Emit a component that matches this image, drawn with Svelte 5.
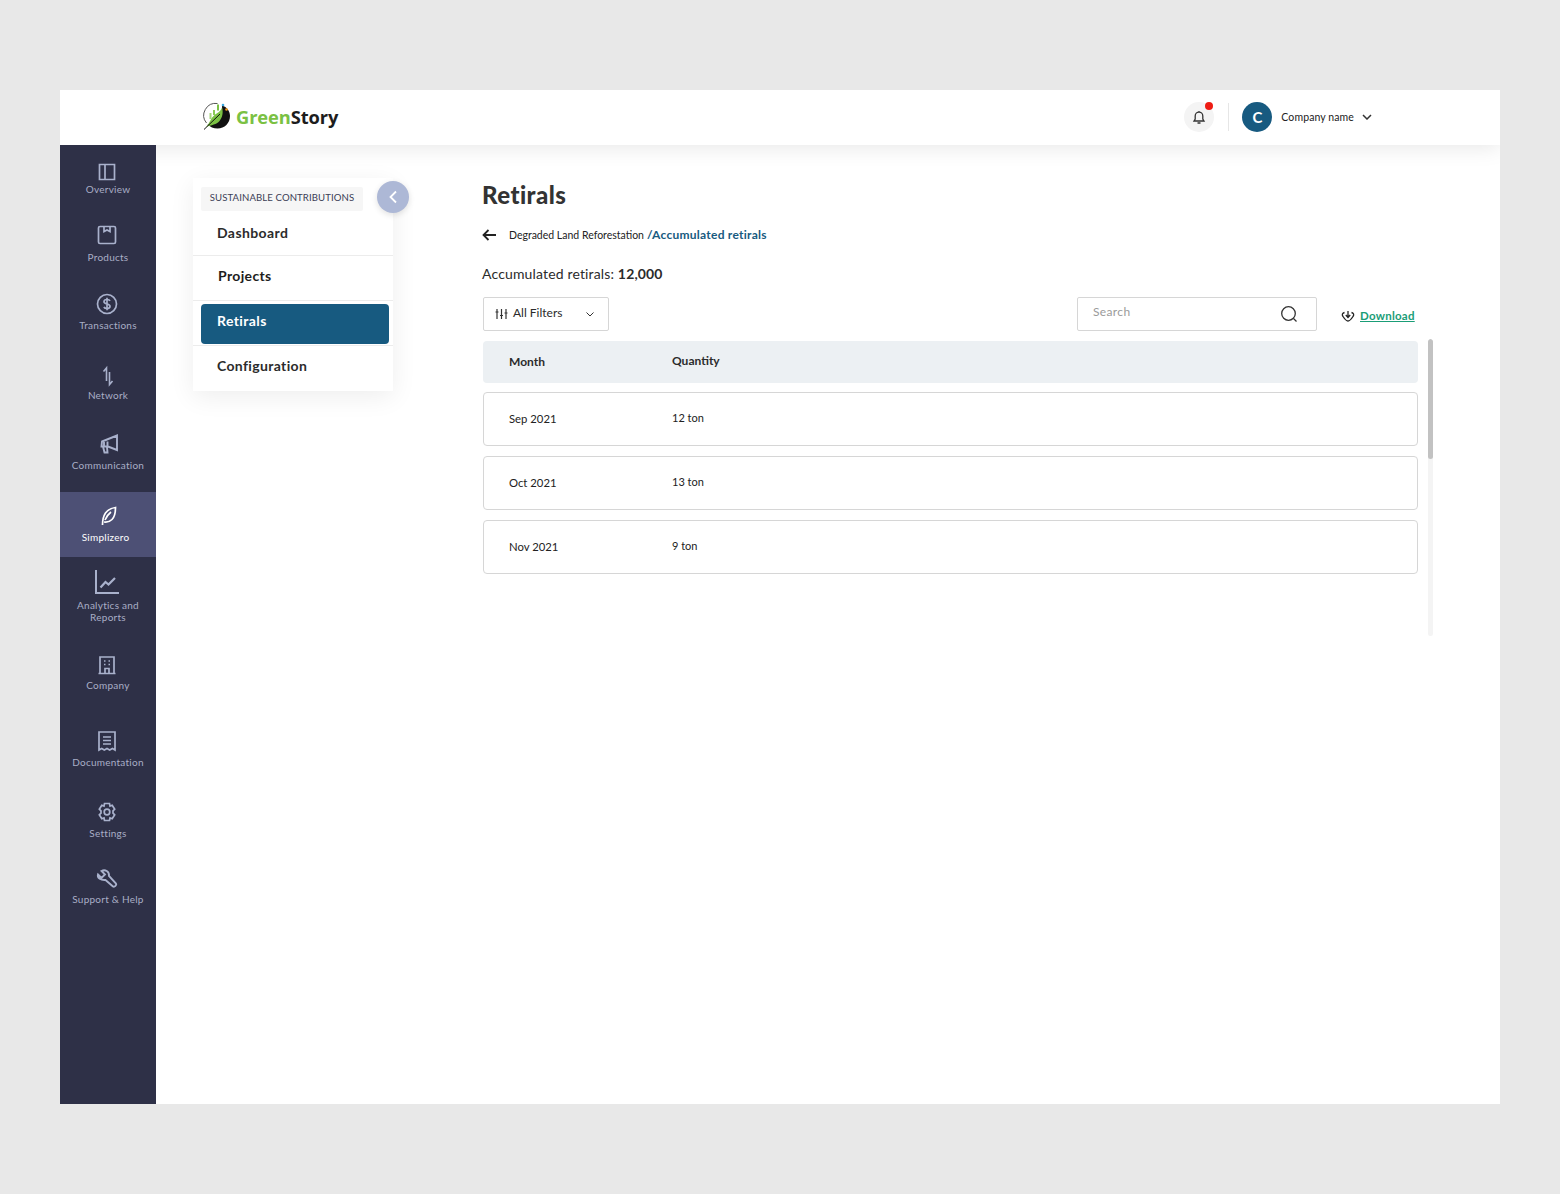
<script>
  const nav = [
    { label: ['Overview'], h: 64, icon: 'overview', dx: -1, dy: 4 },
    { label: ['Products'], h: 68, icon: 'products', dx: -1, dy: -1 },
    { label: ['Transactions'], h: 68, icon: 'transactions', dx: -1, dy: 0 },
    { label: ['Network'], h: 70, icon: 'network', dx: 0, dy: 2 },
    { label: ['Communication'], h: 70, icon: 'communication', dx: 1, dy: 0 },
    { label: ['Simplizero'], h: 65, icon: 'leaf', active: true, dx: 0, dy: 0 },
    { label: ['Analytics and', 'Reports'], h: 80, icon: 'analytics', dx: -1, dy: -2 },
    { label: ['Company'], h: 68, icon: 'company', dx: -1, dy: 1 },
    { label: ['Documentation'], h: 77, icon: 'doc', dx: -1, dy: 0 },
    { label: ['Settings'], h: 71, icon: 'settings', dx: -1, dy: 0 },
    { label: ['Support & Help'], h: 66, icon: 'support', dx: -1, dy: 0 }
  ];
  const rows = [
    ['Sep 2021', '12 ton'],
    ['Oct 2021', '13 ton'],
    ['Nov 2021', '9 ton']
  ];
</script>

<div class="frame">
  <header class="topbar">
    <div class="logo">
      <svg width="28" height="28" viewBox="0 0 28 28" fill="none">
        <path d="M3.500 21A12 12 0 0 1 14.500 1.500" stroke="#555" stroke-width="1"/>
        <path d="M19 3.500c5 1.500 8 5.500 8 10.500 0 7-5.500 12.500-12.500 12.500-4 0-7.500-1.500-10-4.500 5 .5 9-1 11.500-4.500 2.500-3.500 3.500-9 3-14z" fill="#111"/>
        <path d="M3 25c3.500-3 4-8 8-11.500 3-2.500 6.500-3.500 8-8 1.500 5 .5 10-2.500 13.500-3 3.500-8 4-13.500 6z" fill="#7ac143"/>
        <path d="M1 27.500 17 12" stroke="#111" stroke-width="1"/>
        <rect x="6.500" y="11" width="2" height="6" fill="#a6d67c"/>
        <rect x="10" y="8" width="2" height="5" fill="#8ccb58"/>
        <rect x="14" y="2.500" width="2" height="6" fill="#7ac143"/>
        <circle cx="20" cy="3" r="1.300" fill="#3aa7e0"/>
        <circle cx="23.500" cy="7.500" r="1.300" fill="#f39a1e"/>
      </svg>
      <span class="brand"><b class="green">Green</b><b>Story</b></span>
    </div>
    <div class="top-right">
      <div class="bell">
        <svg width="14" height="15" viewBox="0 0 14 15" fill="none" stroke="#333" stroke-width="1.300"><path d="M2 11h10l-1.200-2V6a3.800 3.800 0 0 0-7.600 0v3zM5.500 13h3M7 2V1"/></svg>
        <i class="dot"></i>
      </div>
      <span class="vsep"></span>
      <span class="avatar">C</span>
      <span class="company">Company name</span>
      <svg class="chev" width="10" height="6" viewBox="0 0 10 6" fill="none" stroke="#333" stroke-width="1.500"><path d="M1 1l4 4 4-4"/></svg>
    </div>
  </header>

  <div class="body">
    <nav class="sidebar">
      {#each nav as item}
        <a class="nav-item" class:active={item.active} style="height:{item.h}px">
          <svg class="nav-icon" style="transform:translate({item.dx}px,{item.dy}px)" width="24" height="24" viewBox="0 0 24 24" fill="none" stroke="currentColor" stroke-width="1.700">
            {#if item.icon === 'overview'}
              <path d="M4.500 4.500h15v15h-15zM10 4.500v15"/>
            {:else if item.icon === 'products'}
              <rect x="3.500" y="3.500" width="17" height="17" rx="1.500"/><path d="M9 3.500v5l3-1.500 3 1.500v-5"/>
            {:else if item.icon === 'transactions'}
              <circle cx="12" cy="12" r="9.500"/><path d="M15 8.800c-.5-1-1.500-1.300-3-1.300-1.800 0-3 .9-3 2.200 0 3 6 1.600 6 4.500 0 1.400-1.300 2.300-3 2.300-1.500 0-2.600-.5-3.100-1.500M12 5.800v12.400"/>
            {:else if item.icon === 'network'}
              <path d="M7.500 7.500 10.500 4v13M13.500 8v12.500l3-3.500" stroke-width="1.600"/>
            {:else if item.icon === 'communication'}
              <path d="M20 3.500v14.500L11 14.500H4.500L5 9.500zM6 14.500 7.500 20.500h3L10 15M7 10v4.500M10.500 9.500v5" stroke-width="1.900"/>
            {:else if item.icon === 'leaf'}
              <path d="M6.500 21c0-5 1-9 3-12 2.500-3.500 6-5 10-5.500 0 5-1 9.500-3.500 12-2 2-5 3-8 2.500M9 16c1.500-3.500 3.500-6 6-8"/>
            {:else if item.icon === 'analytics'}
              <path d="M1 0v23h23" stroke-width="2"/><path d="M5.500 17.500l5-5.500 3 2.500 6.500-6.500" stroke-width="2.200"/>
            {:else if item.icon === 'company'}
              <path d="M5 20V4h14v16M3.500 20.500h17M10 20v-4.500h4V20M9 8h1.500M13.500 8H15M9 11.500h1.500M13.500 11.500H15"/>
            {:else if item.icon === 'doc'}
              <path d="M4 21V3h16v18l-2.600-1.500-2.700 1.500-2.700-1.500-2.700 1.500-2.600-1.500zM8 8h8M8 11.500h8M8 15h8"/>
            {:else if item.icon === 'settings'}
              <path d="M9.500 3.500h5l.5 2.500 2.200-.8 2.500 4-1.700 1.700v2.200l1.700 1.700-2.500 4-2.200-.8-.5 2.500h-5L9 18l-2.200.8-2.500-4L6 13.100v-2.200L4.300 9.200l2.500-4L9 6z"/><circle cx="12" cy="12" r="2.800"/>
            {:else if item.icon === 'support'}
              <path d="M3 8.500 6.500 12l3.500-3.500L6.500 5c3.500-2 8 .5 7.500 5l7 7.500c1 1.500-1.500 4-3 3L10.500 14C6 14.500 2 12 3 8.500z" stroke-width="1.900"/>
            {/if}
          </svg>
          {#each item.label as line}<span>{line}</span>{/each}
        </a>
      {/each}
    </nav>

    <section class="submenu-col">
      <div class="submenu">
        <div class="tag-row">
          <span class="tag">SUSTAINABLE CONTRIBUTIONS</span>
          <button class="collapse" aria-label="Collapse">
            <svg width="10" height="14" viewBox="0 0 10 14" fill="none" stroke="#fff" stroke-width="1.800"><path d="M8 1.500 2.500 7 8 12.500"/></svg>
          </button>
        </div>
        <div class="menu-row r1">Dashboard</div>
        <div class="menu-row r2">Projects</div>
        <div class="menu-row r3"><span class="selected">Retirals</span></div>
        <div class="menu-row r4">Configuration</div>
      </div>
    </section>

    <main class="content">
      <h1>Retirals</h1>
      <div class="crumbs">
        <svg width="14" height="12" viewBox="0 0 14 12" fill="none" stroke="#222" stroke-width="1.800"><path d="M14 6H1.500M6.500 1 1.500 6l5 5"/></svg>
        <span class="crumb">Degraded Land Reforestation</span>
        <b class="crumb-strong">/Accumulated retirals</b>
      </div>
      <p class="total">Accumulated retirals: <b>12,000</b></p>
      <div class="toolbar">
        <div class="filter">
          <svg width="13" height="12" viewBox="0 0 13 12" fill="none" stroke="#333" stroke-width="1.200"><path d="M2 1v10M6.500 1v10M11 1v10M.5 4h3M5 7.500h3M9.500 5h3"/></svg>
          <span>All Filters</span>
          <svg class="filter-chev" width="8" height="5" viewBox="0 0 8 5" fill="none" stroke="#333"><path d="M.5.500 4 4 7.500.500"/></svg>
        </div>
        <div class="spacer"></div>
        <div class="search">
          <span>Search</span>
          <svg width="18" height="18" viewBox="0 0 18 18" fill="none" stroke="#333" stroke-width="1.300"><circle cx="8.500" cy="8.500" r="6.800"/><path d="M13.500 13.500l3 3"/></svg>
        </div>
        <div class="download">
          <svg width="14" height="12" viewBox="0 0 14 12" fill="none" stroke="#222" stroke-width="1.300"><path d="M3.500 2.500C1.500 3 .5 4.500 2 6.500c1.300 2 3.500 4.500 5 4.500s3.700-2.500 5-4.500c1.500-2 .5-3.500-1.500-4M7 1v6M4.800 5 7 7.500 9.200 5"/></svg>
          <a>Download</a>
        </div>
      </div>
      <div class="table-wrap">
        <div class="table">
          <div class="thead"><b>Month</b><b>Quantity</b></div>
          {#each rows as r}
            <div class="trow"><span class="month">{r[0]}</span><span class="qty">{r[1]}</span></div>
          {/each}
        </div>
        <div class="scroll"><i></i></div>
      </div>
    </main>
  </div>
</div>

<style>
  :global(body) { margin: 0; background: #e8e8e8; }
  .frame {
    margin: 90px 60px 0;
    width: 1440px;
    height: 1014px;
    background: #fff;
    display: flex;
    flex-direction: column;
    font-family: Lato, "Open Sans", sans-serif;
    color: #2b2b2b;
    overflow: hidden;
  }
  .topbar {
    height: 55px;
    flex: none;
    display: flex;
    align-items: center;
    justify-content: space-between;
    padding: 0 128px 0 143px;
    background: #fff;
    position: relative;
    z-index: 1;
    box-shadow: 0 2px 22px rgba(0,0,0,.1);
  }
  .logo { display: flex; align-items: center; gap: 4px; margin-top: -3px; }
  .brand { font-size: 18.300px; font-family: "Open Sans", sans-serif; letter-spacing: -.1px; color: #1d1d1d; margin-left: 1px; }
  .green { color: #7ac143; }
  .top-right { display: flex; align-items: center; margin-top: -1px; }
  .bell { position: relative; width: 30px; height: 30px; border-radius: 50%; background: #f4f4f4; display: flex; align-items: center; justify-content: center; }
  .dot { position: absolute; right: 1px; top: 0; width: 8px; height: 8px; background: #ee1c14; border-radius: 50%; }
  .vsep { width: 1px; height: 28px; background: #e6e6e6; margin: 0 13px 0 14px; }
  .avatar { width: 30px; height: 30px; border-radius: 50%; background: #175a80; color: #fff; font-size: 15px; font-weight: 700; display: flex; align-items: center; justify-content: center; }
  .company { font-size: 10.500px; margin: 0 8px 0 9px; color: #222; letter-spacing: .1px; }
  .body { flex: 1; display: flex; min-height: 0; }
  .sidebar { width: 96px; flex: none; background: #2e3047; display: flex; flex-direction: column; position: relative; z-index: 2; }
  .nav-item {
    display: flex; flex-direction: column; align-items: center; justify-content: flex-end;
    padding-bottom: 14px; box-sizing: border-box;
    color: #a9aec6; font-size: 10px; line-height: 12px; letter-spacing: .25px;
  }
  .nav-icon { margin-bottom: 3px; color: #a9b1cc; }
  .active { background: #4d5075; color: #fff; margin-top: 7px; }
  .active span { margin-left: -5px; }
  .active .nav-icon { color: #fff; }
  .submenu-col { width: 289px; flex: none; padding: 33px 0 0 37px; box-sizing: border-box; }
  .submenu { width: 200px; height: 213px; background: #fff; box-shadow: 0 6px 24px rgba(0,0,0,.07); }
  .tag-row { position: relative; height: 55px; padding: 7px 0 0 8px; box-sizing: border-box; }
  .tag { display: inline-block; width: 162px; height: 24px; line-height: 22px; background: #f6f6f6; text-align: center; font-size: 9.600px; color: #3b3d55; letter-spacing: .1px; border-radius: 2px; }
  .collapse { position: absolute; left: 184px; top: 3px; width: 32px; height: 32px; border: 0; padding: 0; border-radius: 50%; background: #adb8d6; display: flex; align-items: center; justify-content: center; box-shadow: 0 2px 6px rgba(0,0,0,.12); }
  .menu-row { font-size: 14px; font-weight: 700; padding-left: 24px; box-sizing: border-box; color: #2b2b2b; letter-spacing: .4px; }
  .r1 { margin-top: -7px; height: 30px; line-height: 13px; padding-top: 0; border-bottom: 1px solid #ececec; }
  .r2 { height: 45px; padding: 11px 0 0 25px; border-bottom: 1px solid #ececec; letter-spacing: .35px; color: #1d1d1d; }
  .r3 { height: 45px; padding: 3px 4px 0 8px; border-bottom: 1px solid #ececec; }
  .selected { display: block; height: 40px; background: #175a80; color: #fff; border-radius: 4px; padding: 8px 0 0 16px; box-sizing: border-box; }
  .r4 { padding-top: 11px; letter-spacing: .35px; }
  .content { flex: 1; padding: 35px 67px 0 37px; min-width: 0; box-sizing: border-box; position: relative; }
  h1 { margin: 0; font-size: 24px; line-height: 30px; font-weight: 900; color: #333; letter-spacing: .45px; }
  .crumbs { display: flex; align-items: center; height: 20px; margin-top: 15px; }
  .crumbs svg { margin-right: 13px; margin-top: -1px; }
  .crumb { font-size: 10.500px; color: #222; margin-right: 3px; }
  .crumb-strong { font-size: 12px; color: #175a80; letter-spacing: .25px; margin-top: -1px; }
  .total { margin: 19px 0 0; font-size: 14px; line-height: 20px; color: #2b2b2b; letter-spacing: .15px; }
  .toolbar { display: flex; align-items: flex-start; margin: 13px 17px 10px 1px; height: 34px; }
  .filter { width: 126px; height: 34px; border: 1px solid #d6d6d6; border-radius: 2px; box-sizing: border-box; display: flex; align-items: center; padding: 0 0 3px 11px; font-size: 12px; gap: 5px; }
  .filter-chev { margin-left: auto; margin-right: 14px; margin-top: 3px; }
  .filter svg:first-child { margin-top: 3px; }
  .spacer { flex: 1; }
  .search { width: 240px; height: 34px; border: 1px solid #d6d6d6; border-radius: 2px; box-sizing: border-box; display: flex; align-items: center; justify-content: space-between; padding: 0 18px 0 15px; font-size: 12px; color: #9a9a9a; letter-spacing: .35px; }
  .search span { margin-top: -5px; }
  .download { width: 75px; flex: none; margin-left: 24px; display: flex; align-items: center; gap: 5px; padding-top: 12px; font-size: 11.500px; font-weight: 700; letter-spacing: .25px; white-space: nowrap; }
  .download a { color: #1a9d77; text-decoration: underline; }
  .table-wrap { display: flex; margin-left: 1px; }
  .table { width: 935px; flex: none; }
  .thead { height: 42px; background: #ecf0f3; border-radius: 4px; display: flex; align-items: center; font-size: 12px; padding: 0 0 2px 26px; box-sizing: border-box; margin-bottom: 9px; }
  .thead b:first-child { width: 163px; }
  .thead b:last-child { margin-top: -1px; }
  .trow { height: 54px; border: 1px solid #d6d6d6; border-radius: 4px; box-sizing: border-box; display: flex; align-items: center; padding: 0 0 2px 25px; font-size: 11.300px; margin-bottom: 10px; color: #222; }
  .month { width: 163px; }
  .qty { margin-top: -2px; font-size: 11px; }
  .scroll { margin: -2px 0 0 10px; width: 5px; height: 297px; background: #f4f4f4; border-radius: 3px; overflow: hidden; }
  .scroll i { display: block; height: 120px; background: #c2c2c2; border-radius: 3px; }
</style>
